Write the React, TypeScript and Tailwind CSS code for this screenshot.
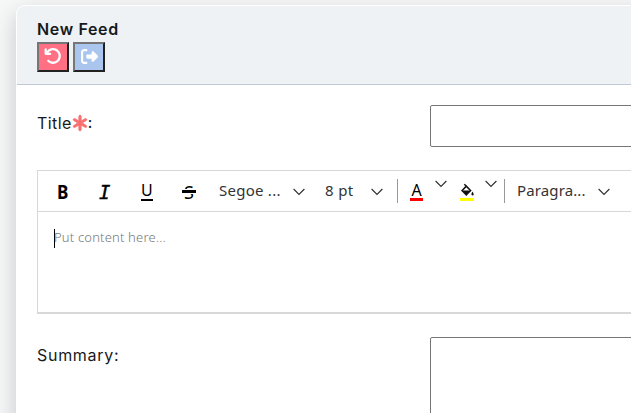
import React from "react";
import { FaArrowRotateLeft, FaRightFromBracket, FaAsterisk } from "react-icons/fa6";

function Chevron({ className = "" }: { className?: string }) {
  return (
    <svg viewBox="0 0 12 8" className={`h-2 w-3 shrink-0 ${className}`} fill="none" stroke="#333" strokeWidth="1.2">
      <path d="M.6 1 6 6.4 11.4 1" />
    </svg>
  );
}

function Bucket() {
  return (
    <svg viewBox="0 0 14 14" className="h-[14px] w-[14px]">
      <path d="M4.300 1.200 6.500 3.300M1.700 8 6.300 3.200 11 8" fill="none" stroke="#111" strokeWidth="1.5" />
      <path d="M1 7.500h10.600l-5.300 5.500zM12.500 8.600c1.600 2.500 1.500 3.900.1 3.900s-1.700-1.400-.1-3.900z" fill="#111" />
    </svg>
  );
}

export default function App() {
  return (
    <div className="h-[413px] w-[631px] overflow-hidden bg-[#f8f8f8] pt-[5px] pl-4 font-['Inter',sans-serif] text-[#16191c]">
      <main className="h-[440px] w-[700px] rounded-tl-[9px] border-t border-l border-white bg-white shadow-[0_8px_24px_rgba(70,85,100,0.3)]">
        <header className="h-[79px] rounded-tl-lg border-b border-[#bec9d5] bg-[#eef2f5] pt-3 pl-5">
          <h1 className="h-6 text-base leading-[22px] font-semibold tracking-[0.65px]">New Feed</h1>
          <div className="flex gap-1">
            <button className="flex h-[30px] w-8 items-center justify-center border-2 border-t-[#767676] border-r-[#212121] border-b-[#212121] border-l-[#767676] bg-[#ff7084] pb-0.5 text-white">
              <FaArrowRotateLeft className="size-[18px]" />
            </button>
            <button className="flex h-[30px] w-8 items-center justify-center border-2 border-t-[#767676] border-r-[#212121] border-b-[#212121] border-l-[#767676] bg-[#aac6ef] pb-0.5 pl-px text-white">
              <FaRightFromBracket className="size-[17px]" />
            </button>
          </div>
        </header>

        <section className="flex h-[85px] pt-5 pl-5">
          <label className="flex h-9 w-[393px] items-center text-base font-normal tracking-[0.4px]">
            Title
            <FaAsterisk className="-ml-px size-[18px] text-[#fa6f6f]" stroke="#fa6f6f" strokeWidth="24" />
            <span className="-ml-px text-[15px] font-medium">:</span>
          </label>
          <div className="h-[42px] w-[270px] rounded-[2px] border border-[#767676]" />
        </section>

        <section className="ml-5 h-[144px] border border-b-2 border-[#d8d8d8] font-['Noto_Sans',sans-serif]">
          <div className="flex h-[41px] items-center border-b border-[#d8d8d8] text-[15px] text-[#333]">
            <span className="ml-[19px] w-[42px] origin-left scale-x-90 pt-0.5 text-[19px] leading-6 font-bold text-black">B</span>
            <span className="w-[42px] pt-px font-['DejaVu_Sans_Mono',monospace] text-[19px] leading-6 text-black italic [-webkit-text-stroke:0.4px_black]">I</span>
            <span className="mt-0.5 flex h-[18px] w-[41px] flex-col items-start text-black">
              <span className="h-4 text-[16px] leading-[14px]">U</span>
              <span className="h-0.5 w-3 bg-black" />
            </span>
            <span className="grid w-[37px] pt-px text-black">
              <span className="col-start-1 row-start-1 pl-0.5 text-[18px] leading-6">S</span>
              <span className="col-start-1 row-start-1 h-[5px] w-3.5 self-center border-y-[1.5px] border-white bg-black" />
            </span>
            <span className="w-[74px] pb-0.5 tracking-[0.25px] whitespace-nowrap">Segoe ...</span>
            <Chevron className="mt-px" />
            <span className="ml-5 w-[46px] pb-0.5 tracking-[0.35px] whitespace-nowrap">8 pt</span>
            <Chevron className="mt-px" />
            <span className="ml-[14px] h-6 w-px bg-[#999]" />
            <span className="mt-0.5 ml-3 flex h-[18px] w-[13px] flex-col items-center">
              <span className="h-[15px] text-[16px] leading-[14px] text-black">A</span>
              <span className="h-[3px] w-[13px] bg-[#ff0000]" />
            </span>
            <Chevron className="mb-[15px] ml-3" />
            <span className="mt-0.5 ml-[13px] flex h-[18px] w-[14px] flex-col">
              <Bucket />
              <span className="mt-px h-[3px] w-[14px] shrink-0 bg-[#ffff00]" />
            </span>
            <Chevron className="mb-[15px] ml-[11px]" />
            <span className="ml-[7px] h-6 w-px bg-[#999]" />
            <span className="ml-3 w-[81px] pb-0.5 tracking-[0.12px] whitespace-nowrap">Paragra...</span>
            <Chevron className="mt-px" />
          </div>
          <div className="flex items-center pt-[17px] pl-4">
            <span className="h-[19px] w-px bg-black" />
            <span className="-ml-px pb-0.5 text-[13px] leading-[17px] font-light tracking-[0.18px] text-[#777]">Put content here...</span>
          </div>
        </section>

        <section className="flex pt-[23px] pl-5">
          <label className="h-9 w-[393px] text-base leading-9 tracking-[0.7px]">Summary:</label>
          <div className="h-[100px] w-[270px] rounded-[2px] border border-[#767676]" />
        </section>
      </main>
    </div>
  );
}
